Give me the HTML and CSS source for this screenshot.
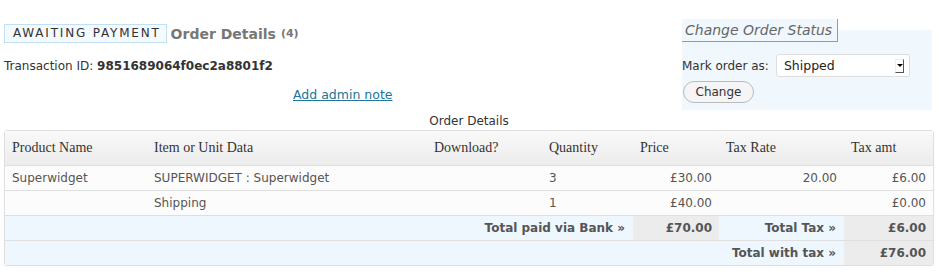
FILE: index.html
```html
<!DOCTYPE html>
<html lang="en">
<head>
    <meta charset="UTF-8">
    <title>Order Details</title>
    <link rel="stylesheet" href="styles.css">
</head>
<body>
<div class="wrap">
    <div class="top">
        <div class="summary">
            <h2><span class="status">AWAITING PAYMENT</span> Order Details <small>(4)</small></h2>
            <p class="txn">Transaction ID: <strong>9851689064f0ec2a8801f2</strong></p>
            <p class="note"><a href="#">Add admin note</a></p>
        </div>
        <fieldset class="status-box">
            <legend>Change Order Status</legend>
            <div class="mark">
                <label for="order-status">Mark order as:</label>
                <div class="select" id="order-status">
                    <span>Shipped</span>
                    <span class="arrow"></span>
                </div>
            </div>
            <button class="change">Change</button>
        </fieldset>
    </div>

    <table class="widefat">
        <caption>Order Details</caption>
        <thead>
            <tr>
                <th class="c-name">Product Name</th>
                <th class="c-item">Item or Unit Data</th>
                <th class="c-dl">Download?</th>
                <th class="c-qty">Quantity</th>
                <th class="c-price">Price</th>
                <th class="c-rate">Tax Rate</th>
                <th class="c-tax">Tax amt</th>
            </tr>
        </thead>
        <tbody>
            <tr>
                <td>Superwidget</td>
                <td>SUPERWIDGET : Superwidget</td>
                <td></td>
                <td>3</td>
                <td class="num">£30.00</td>
                <td class="num">20.00</td>
                <td class="num">£6.00</td>
            </tr>
            <tr>
                <td></td>
                <td>Shipping</td>
                <td></td>
                <td>1</td>
                <td class="num">£40.00</td>
                <td></td>
                <td class="num">£0.00</td>
            </tr>
            <tr class="total">
                <td colspan="4" class="label">Total paid via Bank &raquo;</td>
                <td class="amount">£70.00</td>
                <td class="label">Total Tax &raquo;</td>
                <td class="amount">£6.00</td>
            </tr>
            <tr class="total last">
                <td colspan="6" class="label">Total with tax &raquo;</td>
                <td class="amount">£76.00</td>
            </tr>
        </tbody>
    </table>
</div>
</body>
</html>
```

FILE: styles.css
```css
body {
    margin: 0;
    font-family: "DejaVu Sans", Verdana, sans-serif;
    font-size: 12px;
    color: #333;
    background: #fff;
}
.wrap {
    padding: 0 7px 0 4px;
}
.top {
    display: flex;
    justify-content: space-between;
    align-items: flex-start;
}
.summary {
    width: 420px;
}
h2 {
    margin: 24px 0 0;
    font-size: 14px;
    font-weight: bold;
    color: #777;
    display: flex;
    align-items: center;
    line-height: 18px;
}
h2 small {
    font-size: 11px;
    margin-left: 5px;
}
.status {
    display: inline-block;
    border: 1px solid #bfe0f7;
    background: #f5fafe;
    color: #333;
    font-weight: normal;
    font-size: 12px;
    letter-spacing: 1.8px;
    padding: 0 5px 0 8px;
    line-height: 17px;
    margin-right: 4px;
}
.txn {
    margin: 15px 0 0;
    line-height: 16px;
}
.note {
    margin: 13px 0 0;
    padding-left: 289px;
    font-size: 12.5px;
}
.note a {
    color: #21759b;
}
.status-box {
    width: 250px;
    margin: 30px 0 0;
    padding: 0;
    border: none;
    background: #f0f7fd;
    position: relative;
    height: 80px;
    box-sizing: border-box;
}
.status-box legend {
    position: absolute;
    top: -11px;
    left: 0;
    padding: 2px 5px 2px 3px;
    font-style: italic;
    color: #666;
    font-size: 14px;
    background: #f0f7fd;
    border-right: 1px solid #999;
    border-bottom: 1px solid #999;
    line-height: 18px;
}
.mark {
    display: flex;
    align-items: center;
    padding-top: 24px;
}
.mark label {
    margin-right: 7px;
}
.select {
    width: 134px;
    height: 23px;
    border: 1px solid #ddd;
    border-radius: 3px;
    background: #fff;
    display: flex;
    align-items: center;
    justify-content: space-between;
    padding-left: 7px;
    box-sizing: border-box;
    font-size: 12.5px;
    color: #222;
}
.arrow {
    width: 9px;
    height: 14px;
    margin-right: 5px;
    border: 1px solid #555;
    border-top-color: #eee;
    border-left-color: #eee;
    box-sizing: border-box;
    position: relative;
}
.arrow::after {
    content: "";
    position: absolute;
    left: 1px;
    top: 4px;
    border-left: 3px solid transparent;
    border-right: 3px solid transparent;
    border-top: 3px solid #000;
}
.change {
    margin: 4px 0 0 1px;
    font-family: "DejaVu Sans", sans-serif;
    font-size: 12px;
    color: #333;
    background: #f5f5f5;
    border: 1px solid #bbb;
    border-radius: 11px;
    padding: 3px 11px;
    width: 71px;
    height: 22px;
    line-height: 14px;
}
table.widefat {
    width: 928px;
    border-collapse: separate;
    border-spacing: 0;
    border: 1px solid #dfdfdf;
    border-radius: 3px;
    box-shadow: 0 1px 1px rgba(0,0,0,0.08);
    table-layout: fixed;
    margin-top: 4px;
}
caption {
    font-size: 12px;
    line-height: 14px;
    color: #333;
    padding-bottom: 2px;
}
.widefat th {
    font-family: "Liberation Serif", "Times New Roman", serif;
    font-weight: normal;
    font-size: 14px;
    color: #333;
    text-align: left;
    padding: 0 7px;
    height: 34px;
    background: linear-gradient(#f9f9f9, #ececec);
    border-bottom: 1px solid #dfdfdf;
}
.c-name { width: 128px; }
.c-item { width: 266px; }
.c-dl { width: 101px; }
.c-qty { width: 77px; }
.c-price { width: 72px; }
.c-rate { width: 111px; }
.c-tax { width: 75px; }
.widefat td {
    padding: 0 7px;
    height: 24px;
    color: #555;
    background: #fcfcfc;
    border-bottom: 1px solid #dfdfdf;
    white-space: nowrap;
}
.widefat td.num {
    text-align: right;
}
.widefat tr.total td {
    background: #eff7fe;
    font-weight: bold;
    text-align: right;
}
.widefat tr.total td.amount {
    background: #ececec;
}
.widefat tr.total td.label {
    padding-right: 8px;
}
.widefat tr.last td {
    border-bottom: none;
}
```
